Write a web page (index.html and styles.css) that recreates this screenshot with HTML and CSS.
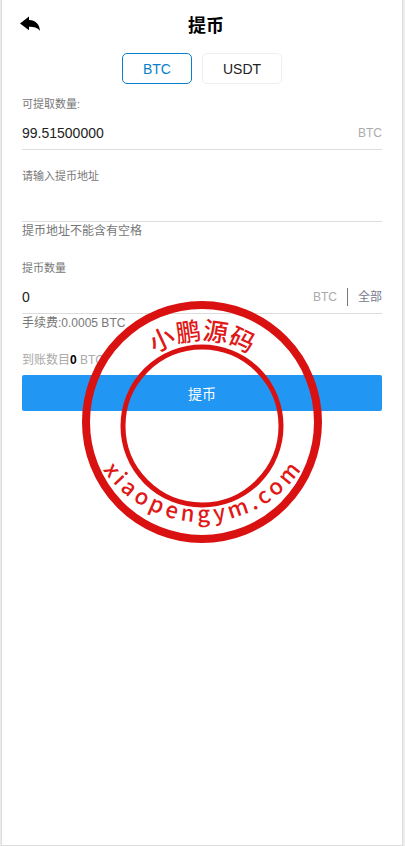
FILE: index.html
```
<!DOCTYPE html>
<html lang="zh-CN">
  <head>
    <meta charset="UTF-8" />
    <meta name="viewport" content="width=device-width, initial-scale=1" />
    <title>提币</title>
    <link rel="stylesheet" href="styles.css" />
  </head>
  <body>
    <main class="page">
      <header class="header">
        <button type="button" class="back-btn" aria-label="返回">
          <svg width="20" height="16" viewBox="0 0 20 16">
            <path d="M0 7.5 L9 0.5 V4 C15.5 4.2 19.5 8 20 15 C17.5 11.6 14 10.8 9 10.8 V14.3 Z" />
          </svg>
        </button>
        <h1>提币</h1>
      </header>

      <div class="tabs">
        <button type="button" class="tab active">BTC</button>
        <button type="button" class="tab">USDT</button>
      </div>

      <form class="form">
        <div class="field">
          <label for="balance">可提取数量:</label>
          <div class="input-row">
            <input type="text" id="balance" value="99.51500000" readonly />
            <span class="unit">BTC</span>
          </div>
        </div>

        <div class="field">
          <label for="address">请输入提币地址</label>
          <div class="input-row">
            <input type="text" id="address" />
          </div>
          <p class="hint">提币地址不能含有空格</p>
        </div>

        <div class="field">
          <label for="amount">提币数量</label>
          <div class="input-row">
            <input type="text" id="amount" value="0" />
            <span class="unit">BTC</span>
            <button type="button" class="all-btn">全部</button>
          </div>
          <p class="hint">手续费:0.0005 BTC</p>
        </div>

        <p class="arrival">到账数目<strong>0</strong> BTC</p>
        <button type="button" class="submit-btn">提币</button>
      </form>

      <!-- watermark stamp -->
      <svg class="stamp" width="244" height="246" viewBox="0 0 244 246">
        <defs>
          <path id="arcTop" d="M36 127 A86 86 0 0 1 208 127" />
          <path id="arcBottom" d="M2 103 A120 120 0 0 0 242 103" />
        </defs>
        <ellipse class="ring-outer" cx="122" cy="123" rx="116" ry="117" />
        <circle class="ring-inner" cx="122" cy="127" r="79" />
        <text class="stamp-name" text-anchor="middle">
          <textPath href="#arcTop" startOffset="50%">小鹏源码</textPath>
        </text>
        <text class="stamp-site" text-anchor="middle" dx="0 4 4 4 4 4 4 4 4 4 4 4 4 4">
          <textPath href="#arcBottom" startOffset="50%">xiaopengym.com</textPath>
        </text>
      </svg>
    </main>
  </body>
</html>
```
FILE: styles.css
```
* {
  margin: 0;
  padding: 0;
  box-sizing: border-box;
}

body {
  font-family: "Liberation Sans", "Noto Sans CJK SC", sans-serif;
  font-size: 12px;
  background: #efefef;
  padding: 0 3px 1px 2px;
}

button,
input {
  font-family: inherit;
  border: none;
  background: none;
}

button {
  cursor: pointer;
}

.page {
  position: relative;
  min-height: calc(100vh - 1px);
  background: #fff;
  box-shadow: 0 0 1px 1px #ddd;
}

.header {
  display: flex;
  align-items: center;
  height: 48px;
  padding: 0 30px 0 18px;
}

.header h1 {
  flex: 1;
  padding-top: 4px;
  font-size: 18px;
  line-height: 24px;
  text-align: center;
  color: #000;
}

.back-btn svg {
  display: block;
}

.tabs {
  display: flex;
  justify-content: center;
  gap: 10px;
  padding-top: 5px;
}

.tab {
  height: 31px;
  padding: 0 20px;
  border: 1px solid #eee;
  border-radius: 5px;
  font-size: 14px;
  color: #222;
}

.tab.active {
  border-color: #0a7fcc;
  color: #0a7fcc;
}

.form {
  padding: 12px 20px;
}

.field {
  margin-bottom: 18px;
}

.field label {
  display: block;
  font-size: 11px;
  line-height: 16px;
  color: #777;
}

.input-row {
  display: flex;
  align-items: center;
  height: 33px;
  margin-top: 5px;
  border-bottom: 1px solid #ddd;
}

.input-row input {
  flex: 1;
  min-width: 0;
  font-size: 14px;
  color: #222;
  outline: none;
}

.unit {
  color: #aaa;
}

.all-btn {
  height: 18px;
  margin-left: 10px;
  padding-left: 10px;
  border-left: 1px solid #777;
  font-size: 12px;
  line-height: 18px;
  color: #7a7a8c;
}

.hint {
  line-height: 18px;
  padding-bottom: 2px;
  color: #777;
}

.arrival {
  line-height: 16px;
  color: #aaa;
}

.arrival strong {
  color: #000;
}

.submit-btn {
  width: 100%;
  height: 36px;
  margin-top: 7px;
  border-radius: 2px;
  background: #2196f3;
  font-size: 14px;
  color: #fff;
}

.stamp {
  position: absolute;
  top: 299px;
  left: 50%;
  transform: translateX(-50%);
  pointer-events: none;
}

.ring-outer {
  fill: none;
  stroke: #d91111;
  stroke-width: 8px;
}

.ring-inner {
  fill: none;
  stroke: #d91111;
  stroke-width: 5px;
}

.stamp-name,
.stamp-site {
  font-family: "Noto Sans CJK SC", sans-serif;
  font-weight: 500;
  fill: #e01818;
}

.stamp-name {
  font-size: 25px;
}

.stamp-site {
  font-size: 22px;
}
```
